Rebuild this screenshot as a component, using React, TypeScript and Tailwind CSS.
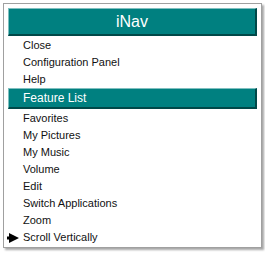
const before = ["Close", "Configuration Panel", "Help"];
const after = ["Favorites", "My Pictures", "My Music", "Volume", "Edit", "Switch Applications", "Zoom"];

function Item({ label }: { label: string }) {
  return <div className="h-[17px] pl-[15px] text-[11px] leading-[17px] text-[#111]">{label}</div>;
}

export default function App() {
  return (
    <div className="w-[265px] h-[253px] bg-white pt-[3px] pl-[3px] font-['Liberation_Sans',Arial,sans-serif]">
      <div className="w-[259px] h-[245px] border border-[#a0a0a0] bg-white px-[4px] pt-[4px] shadow-[2px_2px_2px_rgba(0,0,0,0.35)]">
        <div className="h-[28px] bg-[#008080] border-t border-l border-[#7fbfbf] border-r-2 border-b-2 border-r-[#004848] border-b-[#004848] flex items-center justify-center text-white text-[16px] leading-none">
          iNav
        </div>
        <div className="pt-[1px]">
          {before.map((l) => (
            <Item key={l} label={l} />
          ))}
          <div className="h-[21px] bg-[#008080] border-t border-l border-[#7fbfbf] border-r-2 border-b-2 border-r-[#004848] border-b-[#004848] pl-[14px] text-[12px] leading-[18px] text-white">
            Feature List
          </div>
          <div className="pt-[1px]">
            {after.map((l) => (
              <Item key={l} label={l} />
            ))}
            <div className="relative">
              <svg className="absolute left-[-1px] top-[4px]" width="12" height="10" viewBox="0 0 12 10">
                <polygon points="0,3.5 2,3.5 2,0 12,5 2,10 2,6.5 0,6.5" fill="black" />
              </svg>
              <Item label="Scroll Vertically" />
            </div>
          </div>
        </div>
      </div>
    </div>
  );
}
